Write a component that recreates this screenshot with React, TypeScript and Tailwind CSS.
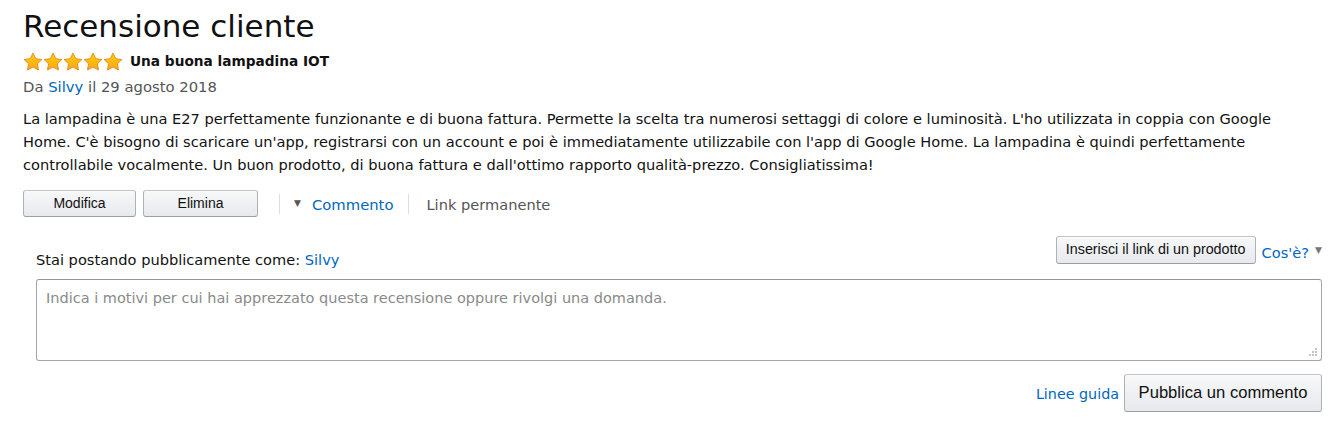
import React from "react";

function Star() {
  return (
    <svg width="20" height="19" viewBox="0 0 24 23">
      <defs>
        <linearGradient id="sg" x1="0" y1="0" x2="0" y2="1">
          <stop offset="0" stopColor="#ffd000" />
          <stop offset="1" stopColor="#ffa41c" />
        </linearGradient>
      </defs>
      <path
        d="M12 1.2l3.3 6.9 7.5 1-5.5 5.2 1.4 7.5L12 18.2l-6.7 3.6 1.4-7.5L1.2 9.1l7.5-1z"
        fill="url(#sg)"
        stroke="#e08a1e"
        strokeWidth="1.1"
        strokeLinejoin="round"
      />
    </svg>
  );
}

const btn =
  "rounded-[3px] border border-[#adb1b8] border-t-[#c0c3c8] border-b-[#9a9ea5] bg-gradient-to-b from-[#f7f8fa] to-[#e7e9ec] text-[#111] font-['Liberation_Sans',Arial,sans-serif] shadow-[0_1px_0_rgba(255,255,255,0.6)_inset]";

export default function App() {
  return (
    <div className="w-[1344px] h-[431px] bg-white text-[#111] px-[23px] pt-[5px] font-['DejaVu_Sans',sans-serif]">
      {/* Header */}
      <h1 className="text-[31px] leading-[42px] text-[#111]">Recensione cliente</h1>
      <div className="flex items-center gap-[7px] mt-[4px] h-[20px]">
        <div className="flex">
          {[1, 2, 3, 4, 5].map((i) => (
            <Star key={i} />
          ))}
        </div>
        <span className="text-[13.7px] font-bold">Una buona lampadina IOT</span>
      </div>
      <div className="text-[14.8px] text-[#555] mt-[5px] leading-[22px]">
        Da <span className="text-[#0066c0]">Silvy</span> il 29 agosto 2018
      </div>

      {/* Body */}
      <p className="text-[14.6px] leading-[23px] mt-[9px] text-[#111]">
        La lampadina è una E27 perfettamente funzionante e di buona fattura. Permette la scelta tra numerosi settaggi di colore e luminosità. L'ho utilizzata in coppia con Google Home. C'è bisogno di scaricare un'app, registrarsi con un account e poi è immediatamente utilizzabile con l'app di Google Home. La lampadina è quindi perfettamente controllabile vocalmente. Un buon prodotto, di buona fattura e dall'ottimo rapporto qualità-prezzo. Consigliatissima!
      </p>

      {/* Actions */}
      <div className="flex items-center mt-[14px]">
        <button className={`${btn} w-[113px] h-[27px] text-[14px]`}>Modifica</button>
        <button className={`${btn} w-[115px] h-[27px] ml-[7px] text-[14px]`}>Elimina</button>
        <div className="w-px h-[20px] bg-[#ddd] ml-[21px]" />
        <span className="ml-[14px] text-[#555] text-[9px]">▼</span>
        <span className="ml-[11px] text-[14.8px] text-[#0066c0] mt-[3px]">Commento</span>
        <div className="w-px h-[20px] bg-[#ddd] ml-[15px]" />
        <span className="ml-[17px] text-[14.6px] text-[#555] mt-[3px]">Link permanente</span>
      </div>

      {/* Comment form */}
      <div className="pl-[13px] mt-[19px] w-[1299px]">
        <div className="flex items-start justify-between">
          <div className="text-[14.6px] text-[#111] leading-[20px] pt-[14px]">
            Stai postando pubblicamente come: <span className="text-[#0066c0]">Silvy</span>
          </div>
          <div className="flex items-center">
            <button className={`${btn} h-[28px] w-[200px] text-[14.3px]`}>Inserisci il link di un prodotto</button>
            <span className="ml-[6px] text-[14.6px] text-[#0066c0] mt-[6px]">Cos'è?</span>
            <span className="ml-[6px] text-[9px] text-[#777] mt-[2px]">▼</span>
          </div>
        </div>
        <div className="relative mt-[9px]">
          <textarea
            className="block w-[1286px] h-[82px] rounded-[3px] border border-[#a6a6a6] border-t-[#949494] px-[9px] py-[8px] text-[14.5px] leading-[20px] font-['DejaVu_Sans',sans-serif] placeholder:text-[#8a8a8a] outline-none resize-none"
            placeholder="Indica i motivi per cui hai apprezzato questa recensione oppure rivolgi una domanda."
          />
          {/* resize grip */}
          <svg className="absolute right-[5px] bottom-[5px]" width="8" height="8" viewBox="0 0 8 8">
            <rect x="6" y="0" width="2" height="2" fill="#c4c4c4" />
            <rect x="3" y="3" width="2" height="2" fill="#c4c4c4" />
            <rect x="6" y="3" width="2" height="2" fill="#c4c4c4" />
            <rect x="0" y="6" width="2" height="2" fill="#c4c4c4" />
            <rect x="3" y="6" width="2" height="2" fill="#c4c4c4" />
            <rect x="6" y="6" width="2" height="2" fill="#c4c4c4" />
          </svg>
        </div>
        <div className="flex items-center justify-end mt-[13px] w-[1286px]">
          <span className="text-[14.3px] text-[#0066c0] mr-[5px] mt-[3px]">Linee guida</span>
          <button className={`${btn} h-[38px] w-[198px] text-[16.6px]`}>Pubblica un commento</button>
        </div>
      </div>
    </div>
  );
}
